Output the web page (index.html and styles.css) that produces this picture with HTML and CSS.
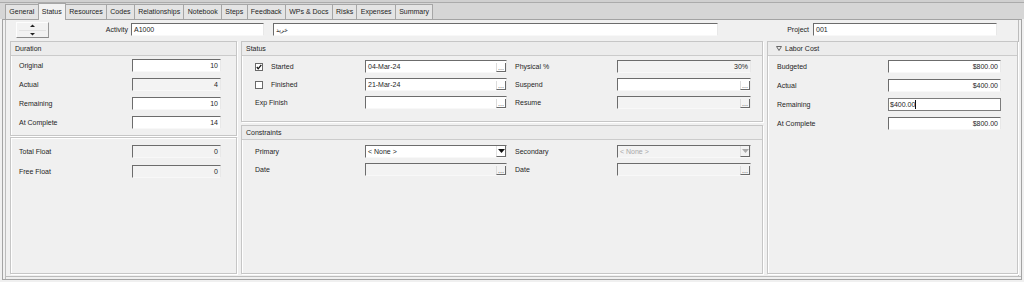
FILE: index.html
```html
<!DOCTYPE html>
<html lang="en">
<head>
  <meta charset="UTF-8" />
  <title>Activity Status</title>
  <link rel="stylesheet" href="styles.css">
</head>
<body>

  <div class="tabstrip">
    <div class="tab">General</div>
    <div class="tab active">Status</div>
    <div class="tab">Resources</div>
    <div class="tab">Codes</div>
    <div class="tab">Relationships</div>
    <div class="tab">Notebook</div>
    <div class="tab">Steps</div>
    <div class="tab">Feedback</div>
    <div class="tab">WPs &amp; Docs</div>
    <div class="tab">Risks</div>
    <div class="tab">Expenses</div>
    <div class="tab">Summary</div>
  </div>

  <div class="frame">
    <div class="topbar">
      <div class="spin">
        <svg width="31" height="14" viewBox="0 0 31 14">
          <polygon points="13,4 15.5,1.5 18,4" fill="#222"/>
          <line x1="2" y1="7.5" x2="29" y2="7.5" stroke="#e2e2e2"/>
          <polygon points="13,10 15.5,12.5 18,10" fill="#222"/>
        </svg>
      </div>
      <span class="top-label activity">Activity</span>
      <div class="field id-field">A1000</div>
      <div class="field name-field" dir="rtl">خريد</div>
      <span class="top-label project">Project</span>
      <div class="field proj-field">001</div>
    </div>

    <div class="panels">
      <!-- left column -->
      <div class="col">
        <section class="box duration">
          <div class="box-head">Duration</div>
          <div class="rows">
            <div class="row"><span class="lbl">Original</span><div class="field num">10</div></div>
            <div class="row"><span class="lbl">Actual</span><div class="field num ro">4</div></div>
            <div class="row"><span class="lbl">Remaining</span><div class="field num">10</div></div>
            <div class="row"><span class="lbl">At Complete</span><div class="field num">14</div></div>
          </div>
        </section>
        <section class="box float">
          <div class="rows">
            <div class="row"><span class="lbl">Total Float</span><div class="field num ro">0</div></div>
            <div class="row"><span class="lbl">Free Float</span><div class="field num ro">0</div></div>
          </div>
        </section>
      </div>

      <!-- middle column -->
      <div class="col">
        <section class="box status">
          <div class="box-head">Status</div>
          <div class="grid">
            <span class="lbl check">
              <svg width="8" height="8" viewBox="0 0 8 8"><rect x="0.5" y="0.5" width="7" height="7" fill="#fff" stroke="#6a6a6a"/><polyline points="1.8,4 3.2,5.8 6.3,1.8" fill="none" stroke="#111" stroke-width="1.3"/></svg>
              Started
            </span>
            <div class="field date"><span class="val">04-Mar-24</span><span class="dots">...</span></div>
            <span class="lbl">Physical %</span>
            <div class="field num ro">30%</div>

            <span class="lbl check">
              <svg width="8" height="8" viewBox="0 0 8 8"><rect x="0.5" y="0.5" width="7" height="7" fill="#fff" stroke="#6a6a6a"/></svg>
              Finished
            </span>
            <div class="field date"><span class="val">21-Mar-24</span><span class="dots">...</span></div>
            <span class="lbl">Suspend</span>
            <div class="field date"><span class="val"></span><span class="dots">...</span></div>

            <span class="lbl">Exp Finish</span>
            <div class="field date"><span class="val"></span><span class="dots">...</span></div>
            <span class="lbl">Resume</span>
            <div class="field date ro"><span class="val"></span><span class="dots">...</span></div>
          </div>
        </section>
        <section class="box constraints">
          <div class="box-head">Constraints</div>
          <div class="grid">
            <span class="lbl">Primary</span>
            <div class="field combo"><span class="val">&lt; None &gt;</span><span class="arrow"><svg width="7" height="4" viewBox="0 0 7 4"><polygon points="0,0 7,0 3.5,4" fill="#111"/></svg></span></div>
            <span class="lbl">Secondary</span>
            <div class="field combo ro disabled"><span class="val">&lt; None &gt;</span><span class="arrow"><svg width="7" height="4" viewBox="0 0 7 4"><polygon points="0,0 7,0 3.5,4" fill="#aaa"/></svg></span></div>

            <span class="lbl">Date</span>
            <div class="field date ro"><span class="val"></span><span class="dots">...</span></div>
            <span class="lbl">Date</span>
            <div class="field date ro"><span class="val"></span><span class="dots">...</span></div>
          </div>
        </section>
      </div>

      <!-- right column -->
      <section class="box labor">
        <div class="box-head">
          <svg class="caret" width="6" height="5" viewBox="0 0 6 5"><polygon points="0.5,0.5 5.5,0.5 3,4.5" fill="none" stroke="#666"/></svg>
          Labor Cost
        </div>
        <div class="rows">
          <div class="row"><span class="lbl">Budgeted</span><div class="field num">$800.00</div></div>
          <div class="row"><span class="lbl">Actual</span><div class="field num">$400.00</div></div>
          <div class="row"><span class="lbl">Remaining</span><div class="field focus">$400.00<span class="cursor"></span></div></div>
          <div class="row"><span class="lbl">At Complete</span><div class="field num">$800.00</div></div>
        </div>
      </section>
    </div>
  </div>

</body>
</html>
```

FILE: styles.css
```css
body {
  margin: 0;
  width: 1024px;
  height: 282px;
  overflow: hidden;
  background: #f0f0f0;
  font-family: "Liberation Sans", Arial, "DejaVu Sans", sans-serif;
  font-size: 7px;
  color: #1e1e1e;
}

/* tab strip */
.tabstrip {
  height: 19px;
  box-sizing: border-box;
  display: flex;
  align-items: flex-end;
  padding-left: 5px;
  background: #d6d6d6;
  box-shadow: inset 0 2px 0 #d0d0d0, inset 0 3px 0 #ababab;
}

.tab {
  height: 14px;
  line-height: 14px;
  padding: 0 3.3px;
  margin-right: -1px;
  border: 1px solid #a6a6a6;
  border-bottom: none;
  background: #e4e4e4;
  white-space: nowrap;
}

.tab.active {
  height: 16px;
  line-height: 16px;
  margin-bottom: -1px;
  background: #f2f2f2;
  position: relative;
  z-index: 1;
}

/* outer frame */
.frame {
  margin: 0 2px;
  height: 261px;
  box-sizing: border-box;
  border: 1px solid #a3a3a3;
  box-shadow: inset 2px 0 0 #f0f0f0, inset 3px 0 0 #bcbcbc,
              inset 0 -2px 0 #f0f0f0, inset 0 -3px 0 #bcbcbc,
              inset -2px 0 0 #f0f0f0, inset -3px 0 0 #bcbcbc;
}

.topbar {
  height: 19px;
  display: flex;
  align-items: center;
  padding-left: 13px;
}

.spin {
  width: 33px;
  height: 16px;
  box-sizing: border-box;
  border-top: 1px solid #fdfdfd;
  border-left: 1px solid #fdfdfd;
  border-right: 1px solid #9a9a9a;
  border-bottom: 1px solid #8a8a8a;
  background: #f2f2f2;
}

.spin svg { display: block; }

.top-label { text-align: right; }
.top-label.activity { width: 79px; margin-right: 3px; }
.top-label.project { width: 91px; margin-right: 4px; }

.id-field { width: 133px; height: 14px; }
.name-field { width: 445px; height: 14px; margin-left: 9px; justify-content: flex-end; font-family: "DejaVu Sans", sans-serif; font-size: 6px; }
.proj-field { width: 184px; height: 15px; }

/* generic field */
.field {
  box-sizing: border-box;
  height: 13px;
  display: flex;
  align-items: center;
  padding: 0 2px;
  background: #fff;
  border-top: 1px solid #6c6c6c;
  border-left: 1px solid #6c6c6c;
  border-right: 1px solid #e8e8e8;
  border-bottom: 1px solid #f8f8f8;
  white-space: nowrap;
  overflow: hidden;
}

.field.num { justify-content: flex-end; }
.field.ro { background: #f3f3f3; }
.field.disabled { color: #a8a8a8; }

.field.focus {
  border: 1px solid #7c7c7c;
  padding-left: 1px;
}

.cursor {
  display: inline-block;
  width: 1px;
  height: 9px;
  background: #111;
}

.field .val { flex: 1; }

.dots {
  align-self: flex-end;
  width: 10px;
  height: 9px;
  margin-right: -2px;
  box-sizing: border-box;
  border-left: 1px solid #dcdcdc;
  border-right: 1px solid #6a6a6a;
  border-bottom: 1px solid #6a6a6a;
  font-size: 7px;
  line-height: 9px;
  text-align: center;
  color: #444;
}

.arrow {
  width: 10px;
  height: 11px;
  margin-right: -2px;
  display: flex;
  align-items: center;
  justify-content: center;
  border-left: 1px solid #e0e0e0;
  border-right: 1px solid #6a6a6a;
  border-bottom: 1px solid #6a6a6a;
  box-sizing: border-box;
}

.arrow svg { display: block; }

/* panels */
.panels {
  margin-top: 2px;
  padding-left: 7px;
  height: 233px;
  display: grid;
  grid-template-columns: 227px 522px 251px;
  column-gap: 4px;
}

.col {
  display: flex;
  flex-direction: column;
}

.box {
  box-sizing: border-box;
  border: 1px solid #c6c6c6;
  box-shadow: inset 1px 1px 0 #fff, 1px 1px 0 #fff;
}

.box-head {
  height: 13px;
  line-height: 13px;
  padding-left: 4px;
  background: #ececec;
  border-bottom: 1px solid #cbcbcb;
  display: flex;
  align-items: center;
  gap: 3px;
}

.caret { display: block; margin-left: 4px; }

.duration { height: 95px; }
.float { flex: 1; margin-top: 1px; }
.status { height: 81px; }
.constraints { flex: 1; margin-top: 3px; }

.rows {
  display: flex;
  flex-direction: column;
  gap: 6px;
  padding: 3px 0 0 8px;
}

.row {
  display: flex;
  align-items: center;
}

.duration .lbl, .float .lbl { width: 113px; }
.duration .field, .float .field { width: 89px; }
.float .rows { padding-top: 7px; gap: 7px; }

.labor .rows { padding: 4px 0 0 9px; }
.labor .lbl { width: 111px; }
.labor .field { width: 113px; }

.grid {
  display: grid;
  grid-template-columns: 110px 142px 110px 134px;
  grid-auto-rows: 13px;
  row-gap: 5px;
  padding: 4px 0 0 13px;
  align-items: center;
}

.grid .lbl:nth-child(4n+3) { padding-left: 8px; }

.constraints .grid { padding-top: 5px; }

.lbl.check {
  display: flex;
  align-items: center;
  gap: 8px;
}

.lbl.check svg { display: block; }
```
